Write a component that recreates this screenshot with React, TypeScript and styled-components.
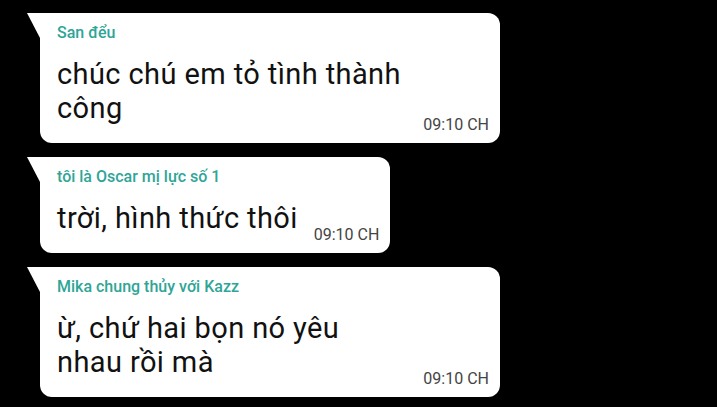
import React from 'react';
import styled, { createGlobalStyle } from 'styled-components';

const GlobalStyle = createGlobalStyle`
  html, body {
    margin: 0;
    padding: 0;
    background: #000;
  }
  body {
    font-family: Roboto, "Noto Sans", "Liberation Sans", sans-serif;
  }
`;

// Chat list
const ChatList = styled.div`
  display: flex;
  flex-direction: column;
  align-items: flex-start;
  gap: 14px;
  padding: 13px 0 0 27px;
  min-height: 407px;
  box-sizing: border-box;
  background: #000;
`;

const Bubble = styled.div<{ $width?: number }>`
  position: relative;
  margin-left: 13px;
  width: ${props => (props.$width ? `${props.$width}px` : 'auto')};
  box-sizing: border-box;
  background: #fff;
  border-radius: 0 12px 12px 12px;
  padding: 10px 11px 18px 17px;

  /* tail in the top-left corner */
  &::before {
    content: '';
    position: absolute;
    left: -13px;
    top: 0;
    width: 13px;
    height: 25px;
    background: #fff;
    clip-path: polygon(0 0, 100% 0, 100% 100%);
  }
`;

const Sender = styled.div`
  font-size: 16px;
  line-height: 20px;
  font-weight: 500;
  color: #2fa597;
  white-space: nowrap;
`;

const Body = styled.div`
  display: flex;
  align-items: flex-end;
  justify-content: space-between;
  gap: 16px;
  margin-top: 14px;
`;

const Message = styled.div`
  font-size: 29px;
  line-height: 34px;
  letter-spacing: 0.4px;
  color: #111;
  white-space: nowrap;
`;

const Time = styled.div`
  font-size: 16px;
  line-height: 20px;
  color: #444;
  white-space: nowrap;
  margin-bottom: -10px;
`;

type Msg = {
  sender: string;
  lines: string[];
  time: string;
  width?: number;
};

const messages: Msg[] = [
  { sender: 'San đểu', lines: ['chúc chú em tỏ tình thành', 'công'], time: '09:10 CH', width: 460 },
  { sender: 'tôi là Oscar mị lực số 1', lines: ['trời, hình thức thôi'], time: '09:10 CH' },
  { sender: 'Mika chung thủy với Kazz', lines: ['ừ, chứ hai bọn nó yêu', 'nhau rồi mà'], time: '09:10 CH', width: 460 },
];

const App = () => {
  return (
    <>
      <GlobalStyle />
      <ChatList>
        {messages.map((m, i) => (
          <Bubble key={i} $width={m.width}>
            <Sender>{m.sender}</Sender>
            <Body>
              <Message>
                {m.lines.map((line, j) => (
                  <div key={j}>{line}</div>
                ))}
              </Message>
              <Time>{m.time}</Time>
            </Body>
          </Bubble>
        ))}
      </ChatList>
    </>
  );
};

export default App;
